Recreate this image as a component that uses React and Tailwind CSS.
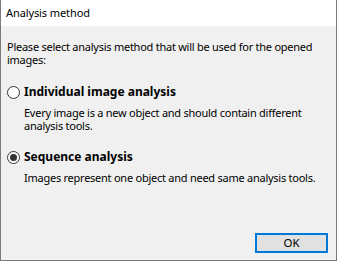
export default function App() {
  return (
    <div className="w-[337px] h-[261px] border border-t-0 border-[#7a7a7a] bg-[#f0f0f0] flex flex-col text-black whitespace-nowrap" style={{ fontFamily: '"Noto Sans", sans-serif' }}>
      <div className="h-[26px] bg-white flex items-center pl-[5px] text-[11px] tracking-[-0.1px]">
        Analysis method
      </div>
      <div className="flex flex-col flex-1 px-[6px]">
        <p className="mt-[14px] text-[11px] tracking-[-0.25px] leading-[13px]">
          Please select analysis method that will be used for the opened
          <br />
          images:
        </p>
        <label className="mt-[18px] h-[16px] flex items-center gap-[4px]">
          <span className="w-[13px] h-[13px] rounded-full border border-[#333] bg-white" />
          <span className="text-[12px] font-bold">Individual image analysis</span>
        </label>
        <p className="ml-[17px] mt-[6px] text-[11px] tracking-[-0.25px] leading-[13px]">
          Every image is a new object and should contain different
          <br />
          analysis tools.
        </p>
        <label className="mt-[17px] h-[16px] flex items-center gap-[4px]">
          <span className="w-[13px] h-[13px] rounded-full border border-[#333] bg-white flex items-center justify-center">
            <span className="w-[7px] h-[7px] rounded-full bg-[#333]" />
          </span>
          <span className="text-[12px] font-bold">Sequence analysis</span>
        </label>
        <p className="ml-[17px] mt-[6px] text-[11px] tracking-[-0.25px] leading-[13px]">
          Images represent one object and need same analysis tools.
        </p>
        <div className="mt-auto mb-[7px] flex justify-end pr-[2px]">
          <button className="w-[73px] h-[20px] border-2 border-[#0078d7] bg-[#e1e1e1] text-[11.5px] leading-none">
            OK
          </button>
        </div>
      </div>
    </div>
  );
}
